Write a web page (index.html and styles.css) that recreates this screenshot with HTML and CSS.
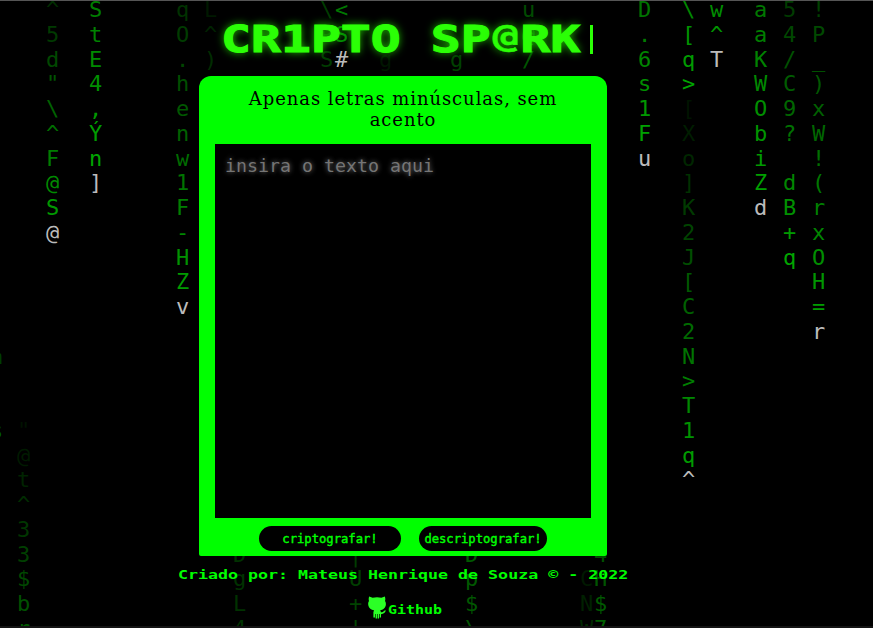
FILE: index.html
```html
<!DOCTYPE html>
<html lang="pt-br">
<head>
<meta charset="utf-8">
<title>Cripto Spark</title>
<link rel="stylesheet" href="styles.css">
</head>
<body>
<svg class="rain" id="rain" width="873" height="628" aria-hidden="true"></svg>
<main class="page">
  <h1 class="title"><span class="title-text">CR1PTO SP<span class="at">@</span>RK</span><span class="cursor"></span></h1>
  <section class="panel">
    <h2 class="hint">Apenas letras minúsculas, sem acento</h2>
    <textarea class="input" placeholder="insira o texto aqui"></textarea>
    <div class="actions">
      <button class="btn btn-wide">criptografar!</button>
      <button class="btn">descriptografar!</button>
    </div>
  </section>
  <footer class="footer">
    <p class="credit"><span class="credit-text">Criado por: Mateus Henrique de Souza © - 2022</span></p>
    <a class="github">
      <svg class="cat" viewBox="0 0 18 23"><path d="M1.2 0.4 L4.6 1.8 Q9 .9 13.4 1.8 L16.8 .4 Q17.7 2.8 17 5 Q18.4 7 17.6 10 Q16.6 13.6 12.2 14.3 L13 16.3 Q15.2 16.6 16 14.8 L17.8 14.3 Q17 18 13 18.2 V21.6 H11.7 V18 H11 V22.4 H9.6 V18 H9 V22.4 H7.6 V18 H7 V21.6 H5.4 V16.3 L6 14.3 Q1.4 13.6 .5 10 Q-.4 7 1 5 Q.3 2.8 1.2 .4Z"/></svg>
      <span class="github-text">Github</span>
    </a>
  </footer>
</main>
<script src="rain.js"></script>
</body>
</html>
```
FILE: styles.css
```css
* { box-sizing: border-box; }
html, body { height: 100%; }
body {
  margin: 0;
  position: relative;
  height: 628px;
  overflow: hidden;
  background: #000;
  border-top: 1px solid #555;
  border-bottom: 2px solid #141414;
}
.rain {
  position: absolute;
  left: 0;
  top: -1px;
  font-family: "DejaVu Sans Mono", monospace;
  font-size: 22px;
}
.page {
  position: relative;
  width: 806px;
  display: flex;
  flex-direction: column;
  align-items: center;
}
.title {
  margin: 0;
  width: 362px;
  height: 75px;
  padding-top: 17px;
  display: flex;
  align-items: flex-start;
  font: bold 37px/44px "DejaVu Sans Mono", monospace;
  color: #2bff06;
}
.title-text {
  margin-left: -1px;
  white-space: pre;
  transform: scaleX(1.345);
  transform-origin: 0 0;
  -webkit-text-stroke: 1px #2bff06;
  text-shadow: 0 0 7px #1fd000;
}
.at {
  display: inline-block;
  width: 22.27px;
  text-align: center;
  font-size: 32px;
  line-height: 30px;
  vertical-align: 5px;
  -webkit-text-stroke: .5px #2bff06;
}
.cursor {
  width: 3px;
  height: 29px;
  margin: 7px 0 0 102px;
  background: #2bff06;
  flex: none;
}
.panel {
  width: 408px;
  height: 480px;
  padding: 12px 16px 0;
  background: #0f0;
  border-radius: 12px 12px 2px 2px;
}
.hint {
  margin: 0 auto;
  width: 340px;
  height: 56px;
  text-align: center;
  font: normal 18px/21px "DejaVu Serif", serif;
  letter-spacing: .93px;
  color: #000;
}
.input {
  display: block;
  width: 376px;
  height: 374px;
  padding: 10px;
  border: 0;
  resize: none;
  outline: 0;
  background: #000;
  color: #fff;
  font: 18.27px/24px "DejaVu Sans Mono", monospace;
  text-shadow: 0 0 5px #777;
}
.input::placeholder { color: #757575; }
.actions {
  display: flex;
  justify-content: center;
  gap: 18px;
  padding-top: 8px;
}
.btn {
  width: 128px;
  height: 25px;
  padding: 1px 0 0;
  border: 0;
  border-radius: 13px;
  background: #000;
  color: #0f0;
  font: 12.18px/24px "DejaVu Sans Mono", monospace;
  -webkit-text-stroke: .4px #0f0;
}
.btn-wide { width: 142px; }
.footer {
  width: 100%;
  color: #0f0;
  display: flex;
  flex-direction: column;
  align-items: center;
  font-family: "DejaVu Sans Mono", monospace;
  font-weight: bold;
}
.credit {
  margin: 0;
  padding-top: 11px;
  height: 40px;
  font-size: 13px;
  line-height: 16px;
}
.credit-text {
  display: inline-block;
  white-space: nowrap;
  transform: scaleX(1.278);
}
.github {
  width: 71px;
  display: flex;
  align-items: flex-start;
}
.cat {
  width: 18px;
  height: 23px;
  margin-right: 2px;
  flex: none;
  fill: #2bff26;
}
.github-text {
  font-size: 11.5px;
  line-height: 28px;
  transform: scaleX(1.3);
  transform-origin: 0 0;
}
```
FILE: rain.js
```js
// Each stream: x, first row, characters, level of first and last glyph, white head.
const streams = [
  [46, 0, '^5d"\\^F@S@', 45, 165, true],
  [89, 0, 'StE4,Ýn]', 125, 170, true],
  [176, 0, 'qO.henw1F-HZv', 50, 165, true],
  [204, 0, 'L^)', 25, 45, false],
  [320, 0, '\\PS', 60, 60, false],
  [335, 0, '<S#', 120, 150, true],
  [379, 2, 'g', 22, 22, false],
  [450, 2, 'g', 65, 65, false],
  [522, 0, 'u@/', 75, 85, false],
  [638, 0, 'D.6s1Fu', 115, 170, true],
  [682, 0, '\\[q>', 135, 165, false],
  [682, 4, '[Xo]K2J[C2N>T1q^', 20, 165, true],
  [710, 0, 'w^T', 140, 160, true],
  [754, 0, 'aaKWObiZd', 120, 165, true],
  [783, 0, '54/C9? dB+q', 60, 165, false],
  [812, 0, '!P_)xW!(rxOH=r', 65, 165, true],
  [-10, 14, 'a', 60, 60, false],
  [-10, 17, 's', 90, 90, false],
  [17, 17, '"@t^33$br', 18, 90, false],
  [233, 22, 'DgL4', 50, 50, false],
  [349, 22, '|U+|', 60, 70, false],
  [465, 22, 'Dp$\\', 90, 85, false],
  [580, 23, 'CNW', 25, 40, false],
  [594, 22, '4H$7', 80, 95, false]
];
const svg = document.getElementById('rain');
for (const [x, row, chars, from, to, head] of streams) {
  [...chars].forEach((c, i) => {
    const t = document.createElementNS('http://www.w3.org/2000/svg', 'text');
    const last = chars.length - 1;
    const g = Math.round(from + (to - from) * (last ? i / last : 1));
    t.setAttribute('x', x);
    t.setAttribute('y', 17 + (row + i) * 24.75);
    t.setAttribute('fill', head && i === last ? '#bbb' : `rgb(0,${g},0)`);
    t.textContent = c;
    svg.appendChild(t);
  });
}
```
